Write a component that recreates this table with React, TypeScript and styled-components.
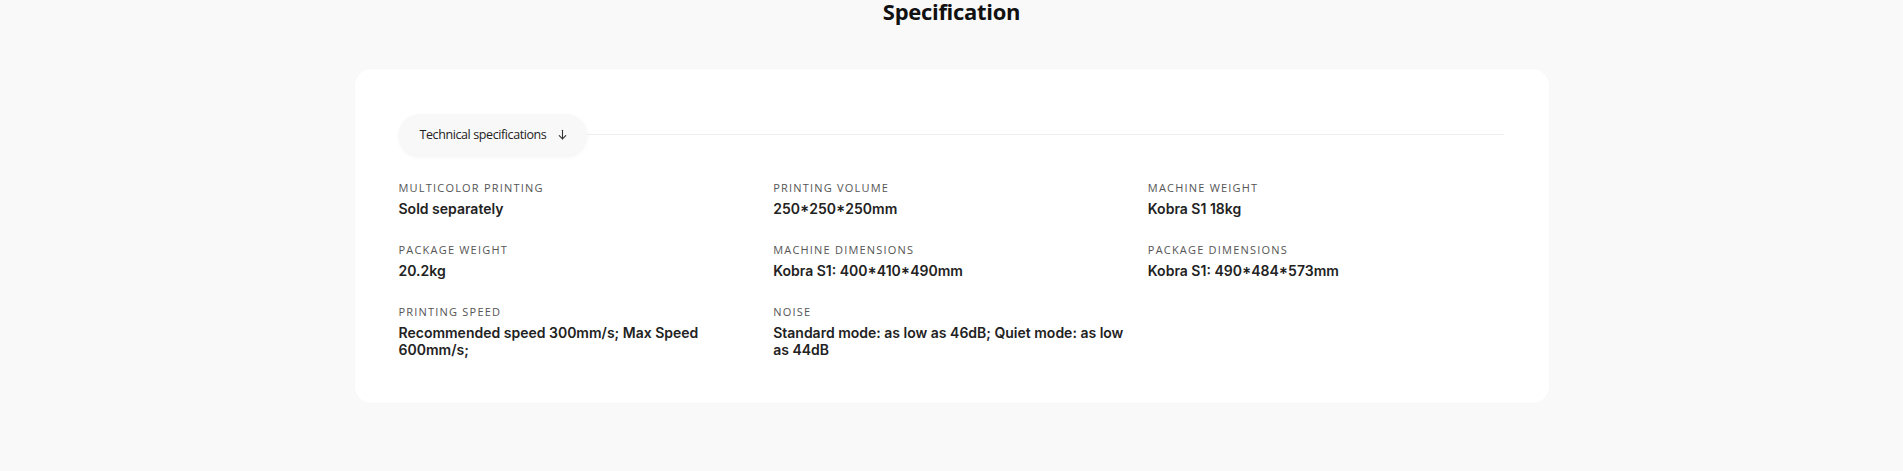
import React from 'react';
import styled, { createGlobalStyle } from 'styled-components';

const GlobalStyle = createGlobalStyle`
	html, body {
		margin: 0;
		padding: 0;
		background: #f9f9f9;
	}
	* {
		box-sizing: border-box;
	}
`;

const Page = styled.div`
	min-height: 471px;
	padding-bottom: 68px;
	background: #f9f9f9;
`;

const Title = styled.h2`
	margin: 0;
	padding-top: 0;
	height: 69px;
	text-align: center;
	font-family: 'Open Sans', sans-serif;
	font-weight: 700;
	font-size: 22px;
	line-height: 22px;
	color: #111;
	letter-spacing: -0.3px;
`;

const Card = styled.section`
	width: 1194px;
	margin: 0 auto;
	background: #fff;
	border-radius: 16px;
	padding: 45px 45px 45px 44px;
	box-shadow: 0 0 2px rgba(0, 0, 0, 0.03);
`;

const TabRow = styled.div`
	display: flex;
	align-items: center;
	margin-bottom: 25px;
`;

const Pill = styled.button`
	display: flex;
	align-items: center;
	gap: 10px;
	height: 41px;
	padding: 0 18px 0 21px;
	border: none;
	border-radius: 21px;
	background: #f8f8f8;
	box-shadow: 0 2px 4px rgba(0, 0, 0, 0.05);
	font-family: 'Open Sans', sans-serif;
	font-size: 12.5px;
	letter-spacing: -0.4px;
	color: #222;
	cursor: pointer;

	svg {
		width: 13px;
		height: 13px;
	}
`;

const Rule = styled.div`
	flex: 1;
	height: 1px;
	background: #eeeeee;
`;

const Grid = styled.dl`
	display: grid;
	grid-template-columns: repeat(3, 1fr);
	column-gap: 19px;
	row-gap: 25px;
	margin: 0;
`;

const Item = styled.div`
	display: flex;
	flex-direction: column;
	gap: 4px;
`;

const Label = styled.dt`
	font-family: 'Open Sans', sans-serif;
	font-size: 11px;
	line-height: 16px;
	letter-spacing: 1.2px;
	text-transform: uppercase;
	color: #555;
`;

const Value = styled.dd`
	margin: 0;
	font-family: Inter, 'Noto Sans', sans-serif;
	font-weight: 600;
	font-size: 14px;
	line-height: 17px;
	color: #222;
`;

const specs = [
	{ label: 'Multicolor printing', value: 'Sold separately' },
	{ label: 'Printing volume', value: '250*250*250mm' },
	{ label: 'Machine weight', value: 'Kobra S1 18kg' },
	{ label: 'Package weight', value: '20.2kg' },
	{ label: 'Machine dimensions', value: 'Kobra S1: 400*410*490mm' },
	{ label: 'Package dimensions', value: 'Kobra S1: 490*484*573mm' },
	{ label: 'Printing speed', value: 'Recommended speed 300mm/s; Max Speed 600mm/s;' },
	{ label: 'Noise', value: 'Standard mode: as low as 46dB; Quiet mode: as low as 44dB' },
];

function App() {
	return (
		<Page>
			<GlobalStyle />
			<Title>Specification</Title>
			<Card>
				<TabRow>
					<Pill>
						Technical specifications
						<svg viewBox="0 0 24 24" fill="none" stroke="#333" strokeWidth="2" strokeLinecap="round" strokeLinejoin="round">
							<path d="M12 4v16" />
							<path d="M6 14l6 6 6-6" />
						</svg>
					</Pill>
					<Rule />
				</TabRow>
				<Grid>
					{specs.map((s) => (
						<Item key={s.label}>
							<Label>{s.label}</Label>
							<Value>{s.value}</Value>
						</Item>
					))}
				</Grid>
			</Card>
		</Page>
	);
}

export default App;
